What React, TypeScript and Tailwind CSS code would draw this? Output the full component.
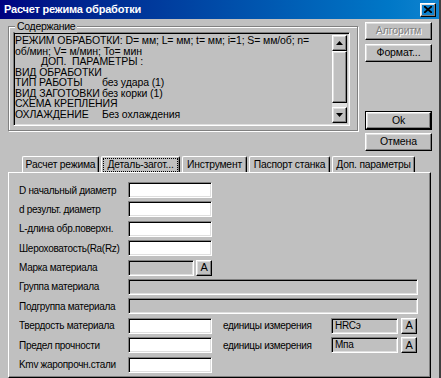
import type { ReactNode } from "react";

const RAISED =
  "border border-t-white border-l-white border-r-black border-b-black shadow-[inset_-1px_-1px_0_#808080,inset_1px_1px_0_#dfdfdf]";
const SUNKEN =
  "border border-t-[#808080] border-l-[#808080] border-r-white border-b-white shadow-[inset_1px_1px_0_#000,inset_-1px_-1px_0_#dfdfdf]";

function Btn({
  children,
  disabled,
  isDefault,
  className = "",
}: {
  children: ReactNode;
  disabled?: boolean;
  isDefault?: boolean;
  className?: string;
}) {
  const inner = (
    <div
      className={`${RAISED} h-full flex items-center justify-center text-[10.5px] tracking-[-0.1px] ${
        disabled ? "text-[#808080] [text-shadow:1px_1px_0_#fff]" : ""
      }`}
    >
      {children}
    </div>
  );
  return isDefault ? (
    <div className={`border border-black ${className}`}>{inner}</div>
  ) : (
    <div className={className}>{inner}</div>
  );
}

function Field({ w, gray, text }: { w: string; gray?: boolean; text?: string }) {
  return (
    <div className={`${SUNKEN} ${w} h-[16px] ${gray ? "bg-[#c0c0c0]" : "bg-white"} pl-[3px] flex items-center leading-none`}>
      {text}
    </div>
  );
}

function SmallA() {
  return (
    <div className={`${RAISED} w-[16px] h-[16px] flex items-center justify-center text-[11px] leading-none`}>A</div>
  );
}

function Arrow({ up }: { up?: boolean }) {
  return (
    <div className={`${RAISED} w-[15px] h-[16px] bg-[#c0c0c0] flex items-center justify-center`}>
      <svg width="7" height="4" viewBox="0 0 7 4">
        {up ? <path d="M3.5 0L7 4H0z" fill="#000" /> : <path d="M0 0h7L3.5 4z" fill="#000" />}
      </svg>
    </div>
  );
}

const memo: [string, string?][] = [
  ["ВИД ОБРАБОТКИ"],
  ["ТИП РАБОТЫ", "без удара (1)"],
  ["ВИД ЗАГОТОВКИ", "без корки (1)"],
  ["СХЕМА КРЕПЛЕНИЯ"],
  ["ОХЛАЖДЕНИЕ", "Без охлаждения"],
];

const tabs = [
  { label: "Расчет режима", w: "w-[77px]" },
  { label: "Деталь-загот...", w: "w-[79px]", focus: true },
  { label: "Инструмент", w: "w-[65px]" },
  { label: "Паспорт станка", w: "w-[81px]" },
  { label: "Доп. параметры", w: "w-[83px]" },
];

function Row({ label, children }: { label: string; children: ReactNode }) {
  return (
    <div className="flex items-center h-[16px]">
      <div className="w-[109px] whitespace-nowrap overflow-hidden">{label}</div>
      {children}
    </div>
  );
}

export default function App() {
  return (
    <div className="w-[441px] h-[378px] bg-[#c0c0c0] overflow-hidden font-['Liberation_Sans',Arial,sans-serif] text-[10px] tracking-[-0.3px] text-black border-r-2 border-r-[#404040] flex flex-col">
      {/* title bar */}
      <div className="h-[19px] bg-gradient-to-r from-[#000080] to-[#1084d0] flex items-center pl-[4px] pr-[3px] shrink-0">
        <span className="text-white font-bold text-[11px] tracking-[-0.2px]">Расчет режима обработки</span>
        <div className={`${RAISED} ml-auto w-[16px] h-[14px] flex items-center justify-center`}>
          <svg width="8" height="7" viewBox="0 0 8 7">
            <path d="M0 0l8 7M8 0L0 7" stroke="#000" strokeWidth="1.8" />
          </svg>
        </div>
      </div>

      <div className="flex pt-[3px]">
        {/* group box */}
        <div className="relative mt-[4px] ml-[8px] w-[350px] h-[105px] border border-[#808080] shadow-[inset_1px_1px_0_#fff,1px_1px_0_#fff] pt-[5px] pl-[4px] pr-[7px] pb-[4px]">
          <span className="absolute -top-[7px] left-[6px] px-[2px] bg-[#c0c0c0] leading-[13px] text-[10.5px]">Содержание</span>
          <div className={`${SUNKEN} h-full flex`}>
            <div className="flex-1 pl-[1px] pt-[2px] text-[10.5px] tracking-[-0.1px] leading-[10.5px] whitespace-nowrap overflow-hidden">
              <div>РЕЖИМ ОБРАБОТКИ: D= мм; L= мм; t= мм; i=1; S= мм/об; n=</div>
              <div>об/мин; V= м/мин; To= мин</div>
              <div className="pl-[26px]">ДОП.&nbsp;&nbsp;ПАРАМЕТРЫ :</div>
              {memo.map(([a, b]) => (
                <div key={a} className="flex">
                  <span className="w-[87px] shrink-0">{a}</span>
                  {b && <span>{b}</span>}
                </div>
              ))}
            </div>
            <div className="w-[15px] my-[2px] mr-[2px] flex flex-col bg-[#e0e0e0]">
              <Arrow up />
              <div className={`${RAISED} h-[52px] bg-[#c0c0c0]`} />
              <div className="flex-1" />
              <Arrow />
            </div>
          </div>
        </div>

        {/* buttons */}
        <div className="ml-[7px] w-[67px] flex flex-col">
          <Btn disabled className="h-[18px]">Алгоритм</Btn>
          <Btn className="h-[18px] mt-[4px]">Формат...</Btn>
          <Btn isDefault className="h-[19px] mt-[49px]">Ok</Btn>
          <Btn className="h-[18px] mt-[3px]">Отмена</Btn>
        </div>
      </div>

      {/* tabs */}
      <div className="flex gap-[2px] pl-[22px] mt-[5px] h-[16px] text-[10.3px] tracking-[-0.2px]">
        {tabs.map((t) => (
          <div
            key={t.label}
            className={`${t.w} h-full border-l border-t border-l-white border-t-white border-r border-r-black shadow-[inset_-1px_0_0_#808080] rounded-tl-[2px] rounded-tr-[2px] flex items-center justify-center whitespace-nowrap`}
          >
            {t.focus ? (
              <span className="outline outline-1 outline-dotted outline-black px-[3px] leading-[12px]">{t.label}</span>
            ) : (
              t.label
            )}
          </div>
        ))}
      </div>

      {/* tab panel */}
      <div className="ml-[8px] w-[423px] h-[214px] border border-t-white border-l-white border-r-black border-b-black shadow-[inset_-1px_-1px_0_#808080] pt-[9px] pl-[10px] flex flex-col gap-[3.4px]">
        <Row label="D начальный диаметр"><Field w="w-[84px]" /></Row>
        <Row label="d результ. диаметр"><Field w="w-[84px]" /></Row>
        <Row label="L-длина обр.поверхн."><Field w="w-[84px]" /></Row>
        <Row label="Шероховатость(Ra(Rz)"><Field w="w-[84px]" /></Row>
        <Row label="Марка материала">
          <Field w="w-[66px]" gray />
          <div className="ml-[2px]"><SmallA /></div>
        </Row>
        <Row label="Группа материала"><Field w="w-[290px]" gray /></Row>
        <Row label="Подгруппа материала"><Field w="w-[290px]" gray /></Row>
        <Row label="Твердость материала">
          <Field w="w-[84px]" />
          <span className="ml-[11px] w-[108px]">единицы измерения</span>
          <Field w="w-[67px]" gray text="HRCэ" />
          <div className="ml-[3px]"><SmallA /></div>
        </Row>
        <Row label="Предел прочности">
          <Field w="w-[84px]" />
          <span className="ml-[11px] w-[108px]">единицы измерения</span>
          <Field w="w-[67px]" gray text="Мпа" />
          <div className="ml-[3px]"><SmallA /></div>
        </Row>
        <Row label="Kmv жаропрочн.стали"><Field w="w-[84px]" /></Row>
      </div>
    </div>
  );
}
